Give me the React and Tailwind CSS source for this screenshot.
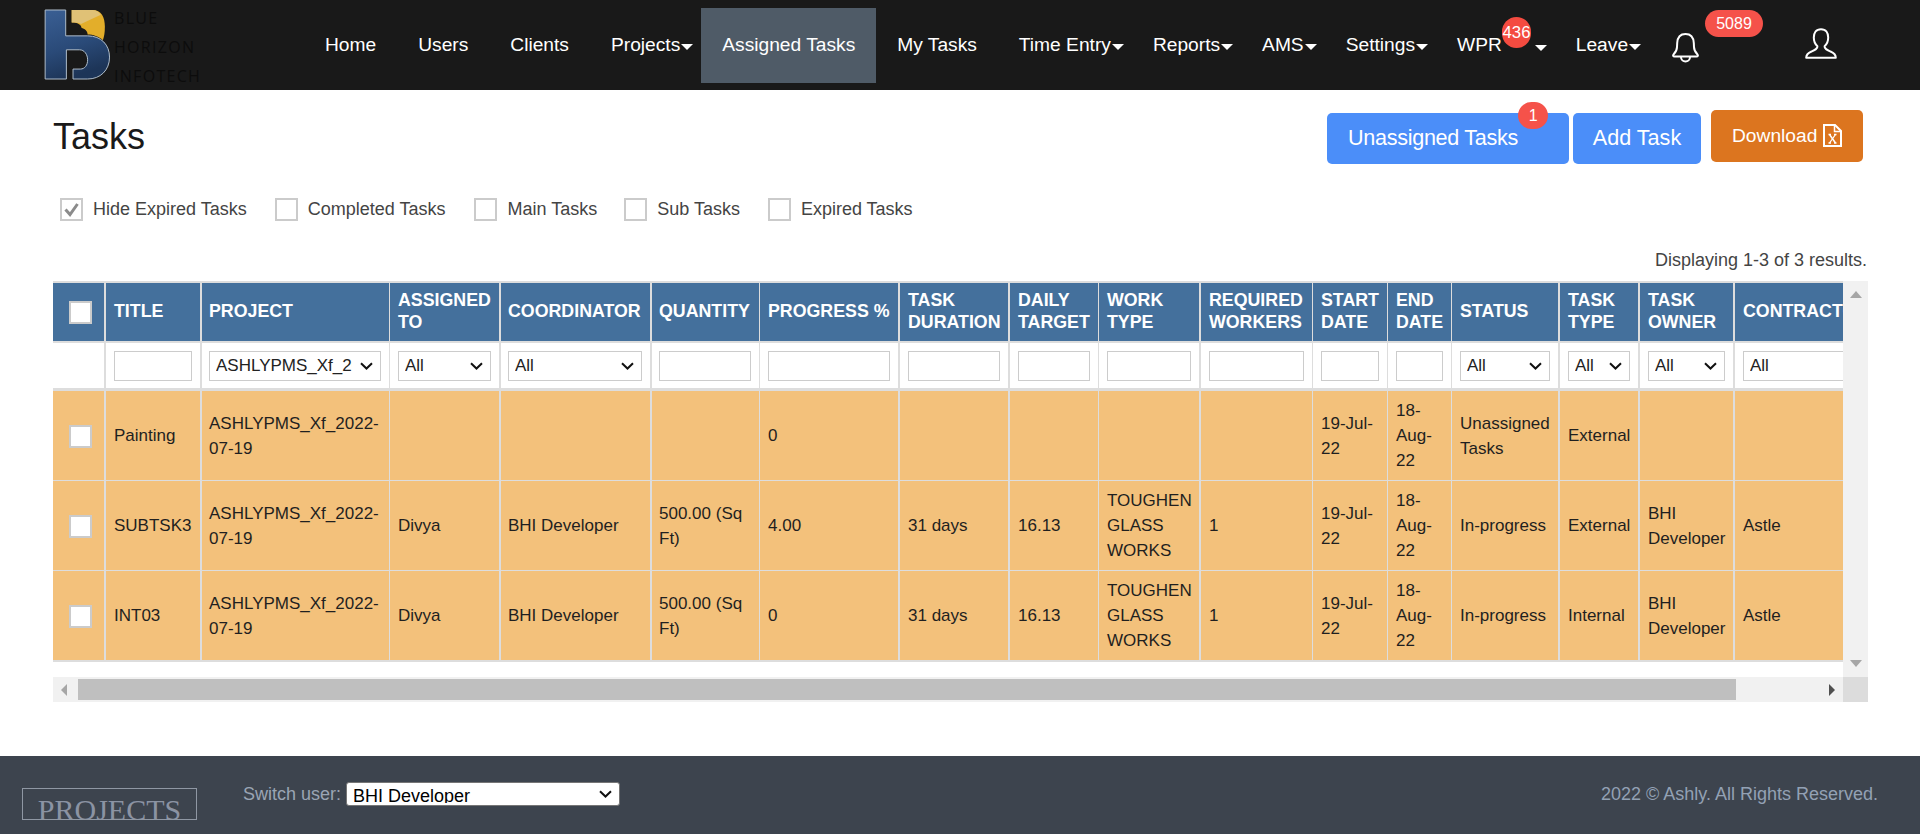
const font = { fontFamily: '"Liberation Sans", Arial, sans-serif' };

function Caret() {
  return <span className="ml-[1px] mt-[3px] inline-block w-0 h-0 border-x-[6px] border-x-transparent border-t-[6px] border-t-white" />;
}

function NavItem({ label, active, caret, cls = "" }) {
  return (
    <a className={`flex items-center h-[75px] pl-[21px] ${caret ? "pr-[8px]" : "pr-[21px]"} text-white text-[19.2px] whitespace-nowrap ${active ? "bg-[#4f5b67]" : ""} ${cls}`}>
      {label}
      {caret && <Caret />}
    </a>
  );
}

function Logo() {
  return (
    <div className="flex items-start w-[300px] pl-[43px] pt-[8px] shrink-0">
      <svg viewBox="36 24 204 220" width="68" height="73" className="shrink-0">
        <defs>
          <linearGradient id="lb" x1="0" y1="0" x2="0.3" y2="1">
            <stop offset="0" stopColor="#3a5f94" />
            <stop offset="0.6" stopColor="#2a4a78" />
            <stop offset="1" stopColor="#1d3558" />
          </linearGradient>
        </defs>
        <path d="M42 30 H104 V108 H170 C212 108 236 136 236 172 C236 212 208 238 170 238 H126 V208 H148 C162 208 170 196 170 180 C170 164 160 150 146 150 H106 V238 H42 Z" fill="url(#lb)" stroke="#aebccb" strokeWidth="3" />
        <path d="M122 30 H184 C212 30 222 52 222 80 C222 98 220 110 216 121 C204 110 186 104 170 104 C170 92 160 86 152 84 C150 74 140 68 122 68 Z" fill="#e3ae2a" />
        <path d="M122 30 H184 C196 30 204 36 210 44 L150 72 C142 68 132 68 122 68 Z" fill="#e0c176" />
      </svg>
      <div className="ml-[3px] -mt-[4px] text-[#0c0c0c] text-[16px] leading-[29px] tracking-[1.3px] uppercase" style={{ fontFamily: '"Open Sans", sans-serif' }}>
        <div>Blue</div>
        <div>Horizon</div>
        <div>Infotech</div>
      </div>
    </div>
  );
}

function Header() {
  return (
    <header className="relative flex items-start h-[90px] bg-[#191919]">
      <Logo />
      <nav className="flex items-center mt-[8px] ml-[4px]">
        <NavItem label="Home" />
        <NavItem label="Users" />
        <NavItem label="Clients" />
        <NavItem label="Projects" caret />
        <NavItem label="Assigned Tasks" active />
        <NavItem label="My Tasks" />
        <NavItem label="Time Entry" caret />
        <NavItem label="Reports" caret />
        <NavItem label="AMS" caret />
        <NavItem label="Settings" caret />
        <a className="relative flex items-center h-[75px] pl-[21px] pr-[8px] text-white text-[19.2px]">
          WPR
          <span className="ml-[32px]"><Caret /></span>
          <span className="absolute left-[66px] top-[9px] w-[29px] h-[31px] rounded-full bg-[#f44b40] text-white text-[16.8px] flex items-center justify-center">436</span>
        </a>
        <NavItem label="Leave" caret />
      </nav>
      <svg viewBox="0 0 27 30" width="27" height="30" fill="none" stroke="#fff" strokeWidth="2" strokeLinejoin="round" className="absolute left-[1672px] top-[33px]">
        <path d="M13.5 1 C8 1 5.5 5 5.2 10 L5 14 C5 18 3 20 1.5 21.5 C0.8 22.5 1 23.5 2.5 23.5 H24.5 C26 23.5 26.2 22.5 25.5 21.5 C24 20 22 18 22 14 L21.8 10 C21.5 5 19 1 13.5 1 Z" />
        <path d="M9 24 C9 30 18 30 18 24" />
      </svg>
      <span className="absolute left-[1705px] top-[10px] w-[58px] h-[27px] rounded-[14px] bg-[#f5524a] text-white text-[16px] flex items-center justify-center">5089</span>
      <svg viewBox="0 0 32 31" width="32" height="31" fill="none" stroke="#fff" strokeWidth="2" strokeLinejoin="round" className="absolute left-[1805px] top-[28px]">
        <path d="M16 1.2 C11 1.2 8.8 5 8.8 9.5 C8.8 13.5 10.5 16.5 12.4 18.2 C12.6 21 10 22 6.5 23.5 C3.5 24.8 1.2 26 1.2 29.8 H30.8 C30.8 26 28.5 24.8 25.5 23.5 C22 22 19.4 21 19.6 18.2 C21.5 16.5 23.2 13.5 23.2 9.5 C23.2 5 21 1.2 16 1.2 Z" />
      </svg>
    </header>
  );
}

function Box({ checked }) {
  return (
    <span className="inline-flex items-center justify-center w-[23px] h-[23px] border-2 border-[#cbcbcb] bg-white shrink-0 align-middle">
      {checked && (
        <svg viewBox="0 0 19 19" width="19" height="19" fill="none" stroke="#8b8b8b" strokeWidth="3">
          <path d="M3.5 9.5 L8 14.5 L15.5 4" />
        </svg>
      )}
    </span>
  );
}

function Chevron({ cls = "" }) {
  return (
    <svg viewBox="0 0 13 8" width="13" height="8" fill="none" stroke="#111" strokeWidth="2" className={`absolute pointer-events-none top-1/2 -translate-y-1/2 ${cls}`}>
      <path d="M1 1.2 L6.5 6.5 L12 1.2" />
    </svg>
  );
}

const cols = [
  { w: 53, b: 2 }, { w: 96, b: 2 }, { w: 188, b: 1 }, { w: 111, b: 2 }, { w: 151, b: 2 }, { w: 108, b: 1 },
  { w: 140, b: 2 }, { w: 110, b: 2 }, { w: 89, b: 1 }, { w: 102, b: 2 }, { w: 112, b: 1 }, { w: 75, b: 1 },
  { w: 64, b: 1 }, { w: 108, b: 2 }, { w: 80, b: 2 }, { w: 95, b: 2 }, { w: 140, b: 0 },
];
const heads = ["", "TITLE", "PROJECT", "ASSIGNED TO", "COORDINATOR", "QUANTITY", "PROGRESS %", "TASK DURATION", "DAILY TARGET", "WORK TYPE", "REQUIRED WORKERS", "START DATE", "END DATE", "STATUS", "TASK TYPE", "TASK OWNER", "CONTRACTOR"];
const filters = [null, "i", "ASHLYPMS_Xf_2022-07-19", "All", "All", "i", "i", "i", "i", "i", "i", "i", "i", "All", "All", "All", "All"];
const rows = [
  ["", "Painting", "ASHLYPMS_Xf_2022-07-19", "", "", "", "0", "", "", "", "", "19-Jul-22", "18-Aug-22", "Unassigned Tasks", "External", "", ""],
  ["", "SUBTSK3", "ASHLYPMS_Xf_2022-07-19", "Divya", "BHI Developer", "500.00 (Sq Ft)", "4.00", "31 days", "16.13", "TOUGHEN GLASS WORKS", "1", "19-Jul-22", "18-Aug-22", "In-progress", "External", "BHI Developer", "Astle"],
  ["", "INT03", "ASHLYPMS_Xf_2022-07-19", "Divya", "BHI Developer", "500.00 (Sq Ft)", "0", "31 days", "16.13", "TOUGHEN GLASS WORKS", "1", "19-Jul-22", "18-Aug-22", "In-progress", "Internal", "BHI Developer", "Astle"],
];
const bw = (b) => (b === 2 ? "border-r-2" : b === 1 ? "border-r" : "");
const pl = (i) => (i === 2 || i === 4 || i === 5 ? "pl-[7px]" : "pl-[8px]");

function TaskTable() {
  return (
    <table className="table-fixed border-separate border-spacing-0 w-[1822px] border-t-2 border-[#dddddd]">
      <colgroup>
        {cols.map((c, i) => <col key={i} style={{ width: c.w }} />)}
      </colgroup>
      <thead>
        <tr>
          {heads.map((h, i) => (
            <th key={i} className={`h-[60px] bg-[#44709c] text-white text-[17.8px] leading-[22px] font-bold text-left align-middle ${pl(i)} pr-[5px] pb-[2px] border-b-2 border-[#dddddd] ${bw(cols[i].b)}`}>
              {i === 0 ? <span className="block pl-[8px] pt-[3px]"><Box /></span> : h}
            </th>
          ))}
        </tr>
        <tr>
          {filters.map((f, i) => (
            <td key={i} className={`h-[48px] bg-white ${pl(i)} pr-[8px] border-b-[3px] border-[#dddddd] ${bw(cols[i].b)}`}>
              {f === "i" && <input className="block w-full h-[30px] border border-[#cccccc] bg-white" />}
              {f && f !== "i" && (
                <div className="relative">
                  <select defaultValue={f} className="block w-full h-[30px] appearance-none border border-[#cccccc] bg-white pl-[6px] pr-[28px] text-[17px] text-[#222222]">
                    <option>{f}</option>
                  </select>
                  <Chevron cls="right-[8px]" />
                </div>
              )}
            </td>
          ))}
        </tr>
      </thead>
      <tbody>
        {rows.map((r, ri) => (
          <tr key={ri}>
            {r.map((v, i) => (
              <td key={i} className={`${ri === 2 ? "h-[91px] border-b-2" : "h-[90px] border-b"} bg-[#f3c17b] text-[#1f1f1f] text-[17px] leading-[25px] align-middle ${pl(i)} pr-[6px] border-[#dddddd] ${bw(cols[i].b)}`}>
                {i === 0 ? <span className="block pl-[8px]"><Box /></span> : v}
              </td>
            ))}
          </tr>
        ))}
      </tbody>
    </table>
  );
}

function Toolbar() {
  return (
    <div className="flex items-start justify-between pl-[53px] pr-[57px] pt-[20px] h-[90px]">
      <h1 className="text-[36px] leading-[40px] text-[#1a1a1a] mt-[7px]">Tasks</h1>
      <div className="flex items-start">
        <a className="relative flex items-center w-[242px] h-[51px] mt-[3px] pl-[21px] rounded-[5px] bg-[#4b8ef9] text-white text-[21.6px] tracking-[-0.3px]">
          Unassigned Tasks
          <span className="absolute left-[191px] top-[-11px] w-[30px] h-[27px] rounded-full bg-[#f5524a] text-[16px] flex items-center justify-center">1</span>
        </a>
        <a className="flex items-center justify-center w-[128px] h-[51px] mt-[3px] ml-[4px] rounded-[5px] bg-[#4b8ef9] text-white text-[21.6px]">Add Task</a>
        <a className="flex items-center w-[152px] h-[52px] ml-[10px] pl-[21px] rounded-[5px] bg-[#dc751f] text-white text-[19.2px]">
          Download
          <svg viewBox="0 0 19 23" width="19" height="23" fill="none" stroke="#fff" strokeWidth="2" className="ml-[6px] -mt-[1px]">
            <path d="M1 1 H12 L18 7 V22 H1 Z" />
            <path d="M11.5 1.5 V7.5 H18" strokeWidth="1.5" />
            <path d="M5.5 10.5 H8 M11 10.5 H13.5 M5.5 19 H8 M11 19 H13.5 M6.5 10.5 L12.5 19" strokeWidth="1.5" />
            <path d="M12.5 10.5 L6.5 19" strokeWidth="1.3" />
          </svg>
        </a>
      </div>
    </div>
  );
}

function Filters() {
  const items = [["Hide Expired Tasks", true, "ml-0"], ["Completed Tasks", false, "ml-[28px]"], ["Main Tasks", false, "ml-[29px]"], ["Sub Tasks", false, "ml-[27px]"], ["Expired Tasks", false, "ml-[28px]"]];
  return (
    <div className="flex items-center pl-[60px] h-[36px] mt-[11px]">
      {items.map(([t, c, m]) => (
        <label key={t} className={`flex items-center ${m}`}>
          <Box checked={c} />
          <span className="ml-[10px] text-[18px] text-[#444444]">{t}</span>
        </label>
      ))}
    </div>
  );
}

function Tri({ dir, color, cls = "" }) {
  const map = {
    up: "border-x-[6px] border-x-transparent border-b-[7px]",
    down: "border-x-[6px] border-x-transparent border-t-[7px]",
    left: "border-y-[6px] border-y-transparent border-r-[6px]",
    right: "border-y-[6px] border-y-transparent border-l-[6px]",
  };
  return <span className={`block w-0 h-0 ${map[dir]} ${color} ${cls}`} />;
}

function TableArea() {
  return (
    <div className="ml-[53px] mr-[52px] mt-[9px]">
      <div className="flex h-[396px]">
        <div className="flex-1 min-w-0 overflow-hidden bg-white">
          <TaskTable />
        </div>
        <div className="w-[25px] shrink-0 bg-[#f1f1f1] flex flex-col justify-between items-center py-[10px]">
          <Tri dir="up" color="border-b-[#a6a6a6]" />
          <Tri dir="down" color="border-t-[#a6a6a6]" />
        </div>
      </div>
      <div className="flex h-[25px]">
        <div className="flex-1 bg-[#f1f1f1] flex items-center pl-[8px] pr-[8px]">
          <Tri dir="left" color="border-r-[#a6a6a6]" />
          <div className="h-[21px] w-[1658px] ml-[11px] bg-[#bfbfbf]" />
          <div className="flex-1" />
          <Tri dir="right" color="border-l-[#505050]" />
        </div>
        <div className="w-[25px] bg-[#dcdcdc]" />
      </div>
    </div>
  );
}

function Footer() {
  return (
    <footer className="relative flex items-start h-[78px] mt-[54px] bg-[#3d444e] text-[18px] text-[#9aa5b4]">
      <div className="mt-[32px] ml-[22px] w-[175px] h-[32px] border border-[#8f97a3] overflow-hidden text-center text-[#8b93a3] text-[30px] leading-[36px] pt-[3px]" style={{ fontFamily: '"Liberation Serif", serif' }}>
        PROJECTS
      </div>
      <div className="flex items-center ml-[46px] mt-[25px]">
        <span>Switch user:</span>
        <div className="relative ml-[5px] -mt-[1px]">
          <select defaultValue="BHI Developer" className="block w-[274px] h-[24px] appearance-none rounded-[3px] bg-white text-black text-[18px] border border-[#767676] pl-[6px] pb-[2px]">
            <option>BHI Developer</option>
          </select>
          <Chevron cls="right-[8px]" />
        </div>
      </div>
      <span className="ml-auto mr-[42px] mt-[25px] text-[#93a1b4]">2022 © Ashly. All Rights Reserved.</span>
    </footer>
  );
}

export default function App() {
  return (
    <div className="h-[834px] overflow-hidden bg-white" style={font}>
      <Header />
      <Toolbar />
      <Filters />
      <div className="text-right pr-[53px] text-[18px] text-[#444444] leading-[24px] mt-[21px]">Displaying 1-3 of 3 results.</div>
      <TableArea />
      <Footer />
    </div>
  );
}
